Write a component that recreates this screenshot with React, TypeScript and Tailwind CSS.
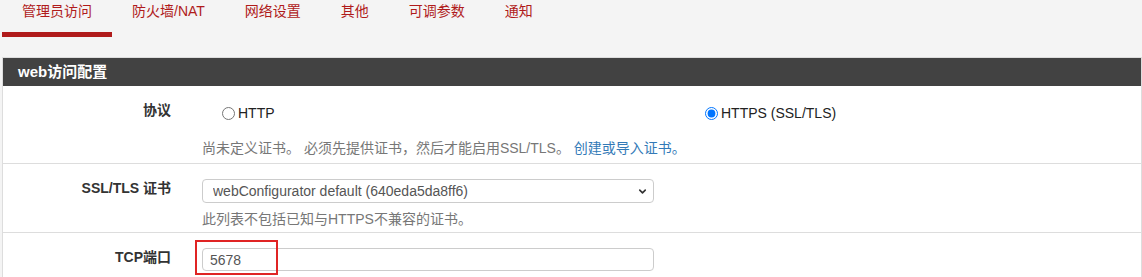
import { ChevronDown } from "lucide-react";

const tabs = ["管理员访问", "防火墙/NAT", "网络设置", "其他", "可调参数", "通知"];

const font = { fontFamily: '"Liberation Sans", "Noto Sans CJK SC", sans-serif' };

function Row({ label, children, last }: { label: string; children: React.ReactNode; last?: boolean }) {
  return (
    <div className={`flex ${last ? "min-h-[80px]" : "border-b border-[#dddddd]"}`}>
      <div className="w-[183px] shrink-0 pt-[14px] pr-[15px] text-right text-[14px] leading-5 font-bold text-[#333333]">
        {label}
      </div>
      <div className="flex-1 pl-[16px]">{children}</div>
    </div>
  );
}

export default function App() {
  return (
    <div className="min-h-screen bg-[#f4f4f4] text-[14px]" style={font}>
      {/* Tabs */}
      <nav className="mb-5 flex pl-[2px]">
        {tabs.map((t, i) => (
          <div
            key={t}
            className={`px-5 pt-px pb-[11px] leading-5 text-[14px] text-[#b01b1b] border-b-[5px] ${
              i === 0 ? "border-[#b01b1b]" : "border-transparent"
            }`}
          >
            {t}
          </div>
        ))}
      </nav>

      {/* Panel */}
      <div className="ml-[2px] border border-[#dddddd] bg-white">
        <div className="h-[28px] bg-[#424242] pl-[15px] text-[15px] font-bold leading-[28px] text-white">
          web访问配置
        </div>

        <Row label="协议">
          <div className="pt-[17px]">
            <div className="flex h-5 items-center text-[#222222]">
              <label className="flex w-[483px] items-center pl-5">
                <input type="radio" name="proto" className="mr-[3px] h-[13px] w-[13px]" />
                HTTP
              </label>
              <label className="flex items-center pl-5">
                <input type="radio" name="proto" defaultChecked className="mr-[3px] h-[13px] w-[13px]" />
                HTTPS (SSL/TLS)
              </label>
            </div>
            <p className="mt-[15px] pb-[5px] leading-5 text-[#777777]">
              尚未定义证书。 必须先提供证书，然后才能启用SSL/TLS。{" "}
              <a className="text-[#337ab7]">创建或导入证书。</a>
            </p>
          </div>
        </Row>

        <Row label="SSL/TLS 证书">
          <div className="pt-[15px]">
            <div className="relative w-[452px]">
              <select
                className="h-6 w-full appearance-none rounded-[4px] border border-[#cccccc] bg-white pl-[10px] text-[14px] text-[#555555]"
                defaultValue="a"
              >
                <option value="a">webConfigurator default (640eda5da8ff6)</option>
              </select>
              <ChevronDown
                size={11}
                strokeWidth={3.5}
                className="pointer-events-none absolute right-[6px] top-[7px] text-[#333333]"
              />
            </div>
            <p className="mt-[6px] pb-[3px] leading-5 text-[#777777]">此列表不包括已知与HTTPS不兼容的证书。</p>
          </div>
        </Row>

        <Row label="TCP端口" last>
          <div className="pt-[15px]">
            <div className="relative w-[452px]">
              <input
                type="text"
                defaultValue="5678"
                className="h-[23px] w-full rounded-[4px] border border-[#cccccc] bg-white pl-[7px] text-[14px] text-[#555555] outline-none"
              />
              <div className="pointer-events-none absolute -left-[7px] -top-[8px] h-[35px] w-[83px] border-2 border-[#e02424]" />
            </div>
          </div>
        </Row>
      </div>
    </div>
  );
}
